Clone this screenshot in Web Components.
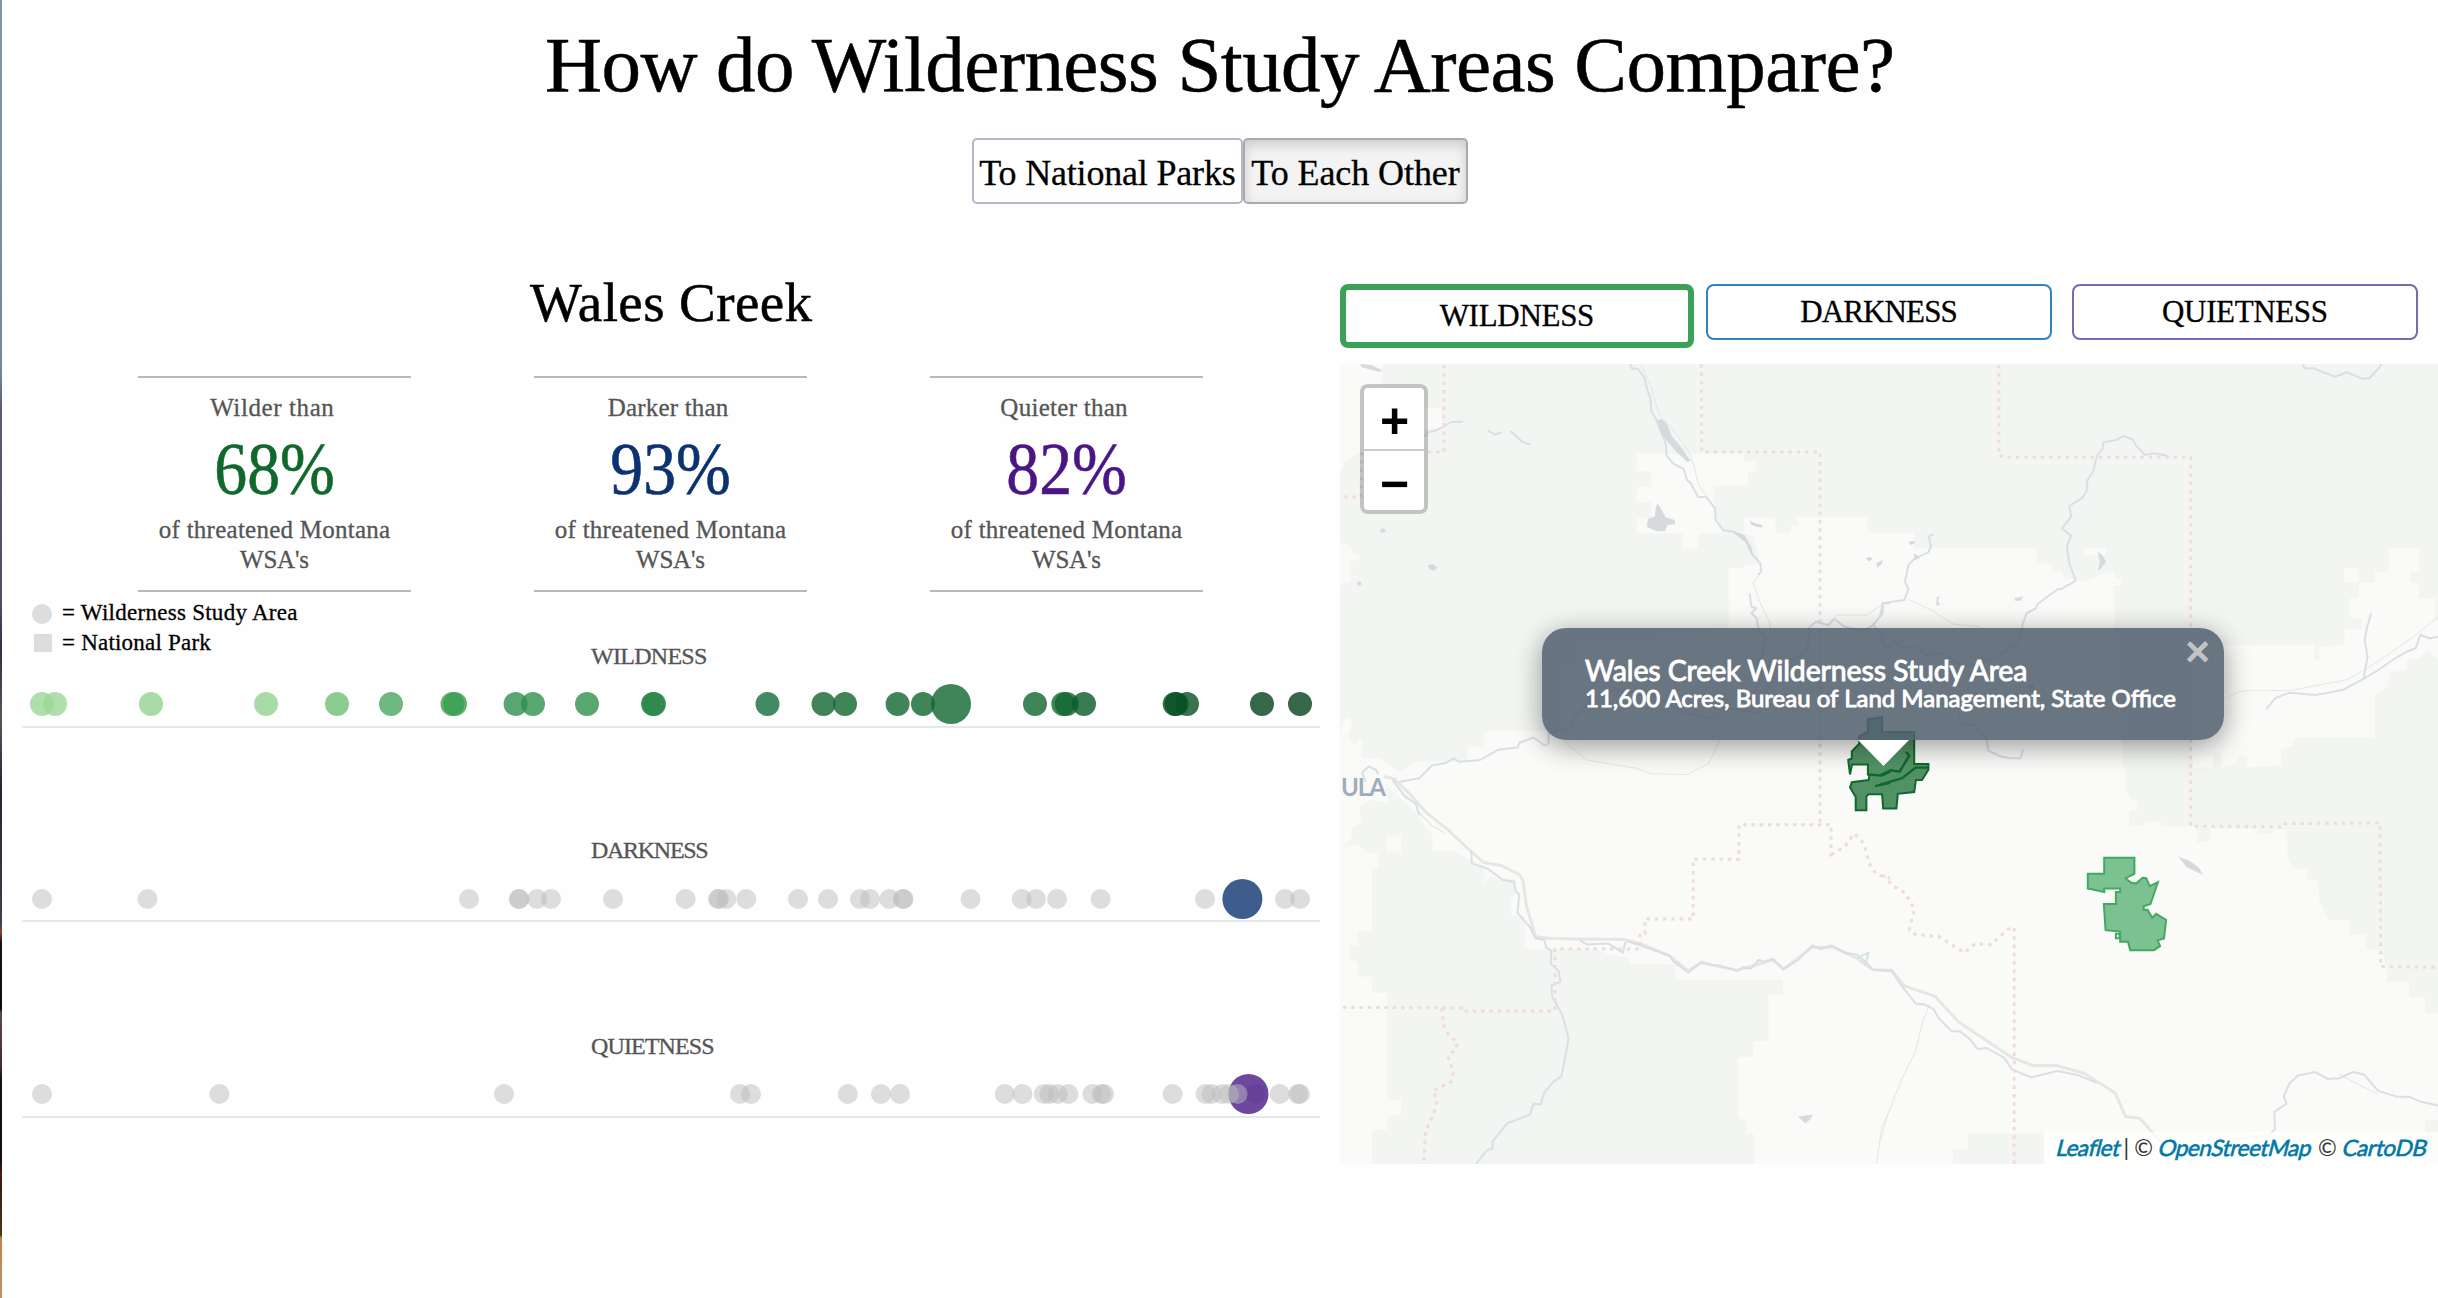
<!DOCTYPE html>
<html lang="en">
<head>
<meta charset="utf-8">
<title>How do Wilderness Study Areas Compare?</title>
<style>
html,body{margin:0;background:#fefefe}
body{font-family:"Liberation Serif",serif;color:#000;width:2438px;height:1298px;overflow:hidden}
</style>
</head>
<body>
<wsa-page></wsa-page>
<script>
/* Inline text tracked out or in to a given width: w = target width in px. */
class FitText extends HTMLElement{
  connectedCallback(){
    const r=this.attachShadow({mode:'open'});
    r.innerHTML='<style>:host{display:inline-block;white-space:nowrap}span{display:inline-block}</style><span><slot></slot></span>';
    const s=r.querySelector('span'),n=this.textContent.length;
    const ls=(+this.getAttribute('w')-s.offsetWidth)/(n-1);
    s.style.letterSpacing=ls+'px';s.style.marginRight=(-ls)+'px';
  }
}
customElements.define('fit-text',FitText);

class ToggleButton extends HTMLElement{
  connectedCallback(){
    this.attachShadow({mode:'open'}).innerHTML=`<style>
    :host{display:block;box-sizing:border-box;height:66px;border:2px solid #b6b6c9;border-radius:5px;font-size:36px;line-height:66px;text-align:center;background:#fff;-webkit-text-stroke:.3px #000}
    :host([active]){border-color:#aaa;background:#f3f3f3;box-shadow:inset 0 5px 12px rgba(0,0,0,.16)}
    </style><slot></slot>`;
  }
}
customElements.define('toggle-button',ToggleButton);

class MetricTab extends HTMLElement{
  connectedCallback(){
    this.attachShadow({mode:'open'}).innerHTML=`<style>
    :host{display:block;box-sizing:border-box;width:346px;height:56px;border:2px solid var(--c);border-radius:8px;font-size:31px;line-height:52px;text-align:center;background:#fff;-webkit-text-stroke:.3px #000}
    :host([active]){width:354px;height:64px;border-width:6px}
    </style><slot></slot>`;
  }
}
customElements.define('metric-tab',MetricTab);

class StatCard extends HTMLElement{
  connectedCallback(){
    const a=k=>this.getAttribute(k);
    this.attachShadow({mode:'open'}).innerHTML=`<style>
    :host{display:block;box-sizing:border-box;width:273px;height:216px;border:solid #b9b9b9;border-width:2px 0;padding-top:15px;text-align:center;font-size:25px;line-height:30px;color:#555;-webkit-text-stroke:.3px #555}
    .l{padding-right:5px}.n{font-size:73px;line-height:84px;margin:5px 0 3px;color:var(--c);-webkit-text-stroke:.6px var(--c);transform:scaleX(.9)}
    </style><div class="l"><fit-text w="${a('lw')}">${a('label')}</fit-text></div>
    <div class="n">${a('value')}</div>
    <div><fit-text w="231">of threatened Montana</fit-text></div><div><fit-text w="69">WSA's</fit-text></div>`;
  }
}
customElements.define('stat-card',StatCard);

/* One-dimensional dot chart; dots = "x[:colour[:radius]]" separated by spaces. */
class DotStrip extends HTMLElement{
  connectedCallback(){
    const y=this.getAttribute('y')||33;
    const dots=this.getAttribute('dots').trim().split(/\s+/).map(d=>{
      const [x,c,r]=d.split(':');
      return c?`<circle cx="${x}" cy="${y}" r="${r||12}" fill="${c}" fill-opacity=".8"/>`:`<circle cx="${x}" cy="${y}" r="10" fill="#bbb" fill-opacity=".5"/>`;
    }).join('');
    this.attachShadow({mode:'open'}).innerHTML=`<style>
    :host{display:block;font-size:24px;line-height:30px;color:#555;-webkit-text-stroke:.3px #555}
    .t{padding-left:589px;height:30px}svg{display:block}
    </style><div class="t"><fit-text w="${this.getAttribute('w')}">${this.getAttribute('label')}</fit-text></div>
    <svg width="1338" height="58" viewBox="2 0 1338 58"><path d="M22 56H1320" stroke="#e7e7e7" stroke-width="2"/>${dots}</svg>`;
  }
}
customElements.define('dot-strip',DotStrip);

class DotLegend extends HTMLElement{
  connectedCallback(){
    this.attachShadow({mode:'open'}).innerHTML=`<style>
    :host{display:block;padding-left:30px;font-size:23px;line-height:32px;-webkit-text-stroke:.3px #000}
    div{display:flex;align-items:center;height:30px;gap:10px}
    fit-text{padding-top:2px}
    svg{display:block}
    </style>
    <div><svg width="20" height="24"><circle cx="10" cy="14" r="10" fill="#ddd"/></svg><fit-text w="235">= Wilderness Study Area</fit-text></div>
    <div><svg width="20" height="24"><rect x="2" y="4" width="18" height="18" fill="#ddd"/></svg><fit-text w="149">= National Park</fit-text></div>`;
  }
}
customElements.define('dot-legend',DotLegend);

/* Map geometry is stored per tile in tile units: [originX, originY, unitsPerPxX, unitsPerPxY]. */
const TILES={A:[1330,270,2.8,3],B:[1880,270,2.81,3],C:[1330,600,2.8,2.75],D:[1880,600,2.81,2.75]};
const pts=s=>{let t;return s.trim().split(/\s+/).map(p=>{
  if(TILES[p[0]]){t=TILES[p[0]];p=p.slice(1)}
  const [x,y]=p.split(',').map(Number);
  return (t[0]+x/t[2]).toFixed(1)+' '+(t[1]+y/t[3]).toFixed(1);
}).join('L')};
const area=(s,a)=>`<path d="M${pts(s)}Z" ${a}/>`;
const line=(s,a)=>`<path d="M${pts(s)}" fill="none" ${a}/>`;

const LAND=[
'A28,282 146,282 146,345 85,345 85,545 60,560 40,580 35,600 28,605',
'A265,415 313,415 313,470 265,480',
'A28,815 60,835 62,845 85,858 75,870 57,875 57,935 28,945',
'A858,552 985,552 1160,552 1160,575 1192,575 1192,603 1170,603 1170,648 1075,648 1075,690 1082,740 1100,790 1030,790 1030,836 988,836 988,790 858,790 858,745 900,745 900,697 858,697 858,650 900,650 900,603 858,603',
'A1160,743 1247,743 1247,788 1290,788 1290,765 1310,765 1310,742 1505,742 1505,788 B0,788 95,788 95,835 440,835 440,880 483,880 483,905 510,905 520,925 550,930 570,935 645,905 660,905 660,925 678,925 678,945 657,945 657,1055 D657,77 660,160 685,260 680,460 690,460 690,515 705,550 722,550 722,580 700,580 700,620 745,620 745,610 790,610 790,622 890,622 890,665 928,665 928,628 1060,628 1060,642 1103,642 1103,632 1140,632 1145,665 1145,710 1160,740 1200,740 1200,770 1230,770 1235,830 1260,880 1320,880 1320,920 1365,920 1365,962 1410,962 1425,1010 1425,1050 1488,1050 1488,1092 1532,1092 1532,1135 1580,1135 1580,1430 1532,1430 1532,1560 460,1560 460,1467 247,1467 247,1510 205,1510 205,1560 C1187,1560 1187,1468 1165,1468 1165,1428 1143,1428 1143,1257 1185,1257 1185,1213 1228,1213 1228,1085 1268,1085 1268,1045 967,1045 967,1003 840,1000 840,985 780,975 740,960 545,960 545,870 505,865 505,825 525,800 520,770 450,760 430,780 430,730 395,715 350,690 288,690 288,650 250,600 215,560 165,520 110,500 80,490 90,470 200,470 240,445 385,445 385,403 432,403 432,360 640,360 640,190 690,190 690,108 900,108 1117,80 A1117,895 1160,895 1160,885 1205,885 1185,800 1160,790',
'C28,370 40,330 58,320 60,350 50,375 70,400 80,380 90,390 90,435 140,435 200,475 150,500 165,560 115,550 80,570 90,610 62,625 60,655 35,682 80,672 100,695 135,697 135,735 118,735 118,910 78,910 78,950 55,950 55,992 78,992 78,1035 118,1035 118,1080 160,1080 160,1375 200,1375 200,1417 160,1417 160,1457 118,1457 118,1560 28,1560',
'C158,650 200,650 200,692 158,692',
'B1305,895 1345,895 1345,938 1305,938','B570,835 635,835 635,855 570,855',
'B1430,835 1515,835 1515,905 1490,905 1490,938 1515,938 1515,985 1560,985 1560,1055 1580,1055 D1580,165 1560,160 1540,135 1515,160 1480,165 1480,190 1430,200 1430,235 1390,260 1390,378 1165,378 1160,400 1128,410 1128,455 1030,460 1030,430 1005,430 1005,450 960,460 960,420 935,420 935,460 880,462 870,380 870,124 1220,124 1220,165 1235,165 1235,130 1305,124 B1305,1078 1355,1078 1355,1050 1318,1040 1318,985 1345,985 1345,940 1390,938 1390,905 1430,905'
];
const RIVERS=[
'A840,282 845,295 862,297 880,322 890,365 897,385 900,425 912,445 940,520 942,555 960,580 990,597 1000,630 1010,640 1030,680 1055,682 1078,715 1080,750 1100,780 1130,785 1165,815 1180,850 1205,880 1207,905 1198,915',
'A1175,970 1180,1010 1193,1015 1180,1030 1195,1045 1198,1070 1218,1105 1210,1160 1195,1195',
'A265,500 275,487 300,480 340,456 372,455','A443,482 462,494 481,487','A505,484 520,497 538,515 560,524',
'A1568,1000 1548,1000 1548,1030 1520,1065 1495,1082 1440,1070 1412,1047 1395,1065 1360,1055 1342,1072 1338,1130 1300,1170 1240,1180 1200,1210',
'A1520,1065 1545,1095 1550,1125 1568,1135',
'B1187,285 1195,296 1220,295 1245,307 1280,320 1312,307 1355,326 1375,325 1405,290 1408,282',
'B812,562 800,555 768,550 745,555 718,525 710,508 682,498 665,510 628,517 626,535 612,553 605,575 600,603 583,630 580,665 570,682 532,708 537,740 512,775 537,797 525,830 532,880 550,932 510,957 500,957 443,1002 438,1015 412,1030 400,1065 397,1100 375,1130 300,1175 230,1190 180,1150 130,1155 100,1130 60,1135 40,1110 20,1130 0,1100',
'B150,793 137,800 143,830 135,848 98,865 80,885 70,935 80,958 68,990 8,1000 0,1040',
'B1380,1030 1368,1075 1362,1110 1370,1160 1358,1230',
'B1568,1100 1545,1105 1518,1095 1505,1135 1480,1145 1440,1170 1400,1200 1350,1232 1300,1260 1225,1275 1150,1268 1110,1285 1085,1318',
'D220,310 230,340 270,345 300,385 305,415 340,430 365,435 395,435 402,410',
'C100,500 90,475 108,458 130,468 135,480','C195,500 250,490 285,455 325,448 345,436 362,445 420,440 470,412 525,406 530,393 570,378 600,400 612,395 612,365 670,355 685,320 710,300 730,270 800,245 900,260 990,310 1060,325 1120,300 1200,310 1230,230',
'C175,495 210,540 240,560 250,592','C395,690 397,725 440,738 485,770 515,775 520,800 530,810 525,860 560,900 575,930 600,935 605,955 620,965 618,1000 640,1020 645,1050 620,1060 622,1090 650,1140 668,1205 658,1260 648,1310 625,1325 600,1355 590,1387 570,1385 560,1415 495,1440 455,1490 455,1510 440,1512 410,1550',
'C700,937 720,947 780,945 820,970 827,940','C830,938 870,950 950,978 962,995 1003,1024 1040,995 1070,1003 1090,1005 1140,1020 1155,1010 1180,1013 1200,990 1215,995 1240,987 1270,1015 1310,990 1350,950 1375,960 1405,950 1440,970 1475,975 1505,1000 1520,1017 1568,1020 D32,1018 60,1060 80,1085 100,1110 125,1112 150,1125 165,1150 200,1185 225,1187 250,1205 275,1235 300,1232 350,1260 370,1290 425,1313 500,1295 560,1308 610,1328',
'C1475,985 1508,970 1498,1005',
'D1568,1390 1520,1380 1490,1367 1450,1365 1400,1350 1360,1305 1330,1298 1290,1315 1258,1317 1222,1298 1175,1308 1150,1330 1135,1365 1142,1385 1108,1408 1110,1455 1095,1470'
];
const ROADS=[
['A870,285 895,335 920,430 960,480 1005,545 1020,590 1030,640 1080,720',1],
['A1207,905 1185,940 1205,1000 1232,1060 1236,1120 1330,1098',1],['A1400,1055 1418,1035 1505,1035 1550,1000',1],
['B80,988 140,1018 205,1062 280,1070 380,1130 450,1170 560,1230',1],['B1568,1040 1500,1100 1370,1195 1310,1230 1150,1262 1020,1262 980,1280',1],
['C150,485 180,492 230,540 270,585 330,632 385,682 430,722 480,730 530,755 540,770 550,840 575,925 610,930 690,932 825,934 870,945 950,978 1003,1020 1040,998 1140,1018 1240,990 1270,1015 1350,955 1410,955 1475,985 1520,1017 1568,1018 D32,1018 70,1062 155,1090 220,1160 370,1258 430,1280 495,1280 575,1302 660,1355 690,1420 730,1425 780,1480',3],
['C650,385 720,440 780,450 860,463 900,478 1000,480 1060,450 1090,390 1100,320',1],
['C250,585 285,620 320,640',1.4],['D140,1110 120,1160 100,1240 60,1320 20,1420 0,1490',1],['C1568,1400 1545,1450 1530,1550',1],
['D1290,1305 1330,1325 1400,1360',1],['D980,1485 1095,1470',1.5],['D780,1480 830,1520 880,1550',2.5]
];
const BORDERS=[
'A319,285 319,546 265,546','A90,546 86,681 28,681','A1040,283 1041,546 1372,546 1372,1070 C1372,620',
'B334,285 334,557 350,562 873,562 873,1055 D873,77 873,622 1130,624 1133,615 1405,613 1407,1008 1568,1010',
'C1403,705 1403,618 1145,618 1145,713 1017,713 1017,877 882,877 882,918 868,918 868,960 630,960 630,1130 375,1130 375,1122 28,1120',
'C1403,700 1440,680 1468,642 1495,670 1510,725 1530,755 1568,765 D10,758 35,785 70,805 97,850 82,908 100,920 165,925 237,970 268,945 312,948 360,905 377,900 377,1551',
'C313,1122 318,1170 335,1200 357,1215 352,1235 330,1255 345,1300 340,1325 288,1350 300,1375 290,1415 268,1460 262,1550'
];
const LAKES=[
'A85,282 115,285 145,300 140,306 110,298 88,292','A917,450 930,447 945,465 955,495 985,535 1010,572 1000,575 970,545 945,515 925,485',
'A917,700 930,722 940,742 965,750 967,762 945,765 938,783 915,784 887,770 890,748 910,738 912,715',
'A275,885 288,882 301,893 290,903 278,897','A138,780 150,775 158,782 146,789','A75,938 84,934 90,942 80,948',
'A1130,783 1160,795 1180,830 1185,855 1205,880 1180,852 1165,818',
'A1175,752 1190,760 1208,764 1212,773 1195,770 1180,764','A1500,865 1512,860 1520,868 1508,874','A1530,880 1548,870 1545,882 1532,893',
'B612,845 625,855 635,875 622,895 612,902 618,875','B80,815 95,813 98,820 85,825','B378,985 403,979 395,992 380,992','B95,850 108,858 112,865 98,870','B160,980 168,980 163,990 168,1008 158,1005',
'D838,706 870,718 895,735 908,756 885,745 862,735','C1311,1420 1352,1415 1345,1427 1332,1440 1320,1430','D415,235 430,230 437,250 422,255'
];

class TerrainMap extends HTMLElement{
  connectedCallback(){
    this.attachShadow({mode:'open'}).innerHTML=`<style>
    :host{display:block;position:relative;width:1098px;height:800px;overflow:hidden;background:#f3f5f2;font-family:Lato,sans-serif}
    svg{display:block}
    .zoom{position:absolute;left:20px;top:20px;width:60px;height:122px;border:4px solid rgba(0,0,0,.2);border-radius:8px;background:#fff;background-clip:padding-box;display:flex;flex-direction:column;font:bold 50px "Liberation Sans",sans-serif;text-align:center}
    .zoom div{box-sizing:border-box;height:61px;line-height:67px;padding-left:1px}.zoom div+div{border-top:2px solid #ccc;line-height:66px}
    .pop{position:absolute;left:202px;top:264px;box-sizing:border-box;width:682px;height:112px;border-radius:24px;background:rgba(84,97,112,.87);box-shadow:0 6px 28px rgba(0,0,0,.4);color:#fff;padding:27px 0 0 43px;-webkit-text-stroke:.9px #fff}
    .h{font-size:28.5px;line-height:30px;height:30px}.s{font-size:24px;line-height:26px}
    .x{position:absolute;right:14px;top:0;font:bold 43px/46px "Liberation Sans",sans-serif;color:#c3c3c3;-webkit-text-stroke:0}
    .tip{position:absolute;left:518px;top:376px}
    .att{position:absolute;right:0;bottom:0;box-sizing:border-box;width:394px;height:32px;background:rgba(255,255,255,.7);font-size:22.5px;line-height:31px;padding:0 11px 0 13px;display:flex;justify-content:space-between;color:#333}
    .att a{display:block;color:#0078a8;-webkit-text-stroke:.6px #0078a8;transform:skewX(-14deg)}
    .att .bar{margin:0 -1px 0 -3px}
    </style>
    <svg width="1098" height="800" viewBox="1340 364 1098 800">
    ${LAND.map(s=>area(s,'fill="#fafaf8"')).join('')}
    ${ROADS.map(([s,w])=>line(s,`stroke="#e6e7e5" stroke-width="${w}" stroke-linejoin="round"`)).join('')}
    ${RIVERS.map(s=>line(s,'stroke="#d7e0e3" stroke-width="2" stroke-linejoin="round"')).join('')}
    ${LAKES.map(s=>area(s,'fill="#d4dadd"')).join('')}
    ${BORDERS.map(s=>line(s,'stroke="#efdadd" stroke-width="3" stroke-dasharray="3.5 4.8"')).join('')}
    <text x="1341" y="795.5" textLength="45" font-size="24" font-weight="bold" fill="#9fadba">ULA</text>
    ${area('C1506,328 1546,323 1546,363 D96,363 96,451 136,451 136,467 118,495 101,495 96,528 50,533 46,573 11,573 C1549,573 1546,534 1508,534 1502,540 1502,578 1472,578 1472,542 1456,515 1461,501 1508,495 1510,483 1506,480 1506,452 1462,452 1456,480 1451,440 1461,436 1461,416 1482,395 1482,375 1506,362','fill="#10682c" fill-opacity=".72" stroke="#10682c" stroke-width="2"')}
    ${line('C1510,480 1545,483 1568,472 D0,482 30,468 55,472 82,428 73,418','stroke="#10682c" stroke-width="2.4"')}
    ${line('C1526,512 1568,503 D0,508 62,490 100,461 136,461','stroke="#10682c" stroke-width="2.4"')}
    ${area('D630,709 715,709 715,753 690,765 705,777 720,780 738,764 748,765 758,787 781,776 760,836 741,842 741,852 752,852 765,874 776,863 804,880 798,931 780,936 787,952 770,963 703,963 697,940 675,940 675,912 634,908 629,836 663,836 663,803 675,803 675,793 630,793 630,803 584,793 584,753 630,753','fill="#3fa75f" fill-opacity=".68" stroke="#43a962" stroke-width="2"')}
    ${area('D663,918 673,918 673,930 663,930','fill="none" stroke="#43a962" stroke-width="2"')}
    </svg>
    <div class="zoom"><div>+</div><div>−</div></div>
    <div class="pop"><div class="h"><fit-text w="442">Wales Creek Wilderness Study Area</fit-text></div><div class="s"><fit-text w="591">11,600 Acres, Bureau of Land Management, State Office</fit-text></div><div class="x">×</div></div>
    <svg class="tip" width="52" height="26"><path d="M0 0H51L25.5 26Z" fill="#fff"/></svg>
    <div class="att"><a><fit-text w="64">Leaflet</fit-text></a><span class="bar">|</span><span>©</span><a><fit-text w="153">OpenStreetMap</fit-text></a><span>©</span><a><fit-text w="84">CartoDB</fit-text></a></div>`;
  }
}
customElements.define('terrain-map',TerrainMap);

class WsaPage extends HTMLElement{
  connectedCallback(){
    this.attachShadow({mode:'open'}).innerHTML=`<style>
    :host{display:grid;grid-template-columns:2px 1fr;height:1298px}
    .edge{background:linear-gradient(#8496a6 0,#75889a 370px,#575e6c 410px,#4c5060 600px,#303341 650px,#55555f 720px,#232533 790px,#3c414d 925px,#8a4a20 932px,#171314 942px,#0d0b0c 1009px,#5a4a48 1013px,#40302c 1066px,#15100e 1080px,#160e0b 1160px,#4a1c10 1174px,#33220f 1190px,#4b3a15 1235px,#c98040 1238px,#c49066)}
    h1,h2{margin:0;font-weight:normal;text-align:center;-webkit-text-stroke:.5px #000}
    h1{font-size:79px;line-height:120px;padding-top:5px;height:118px}
    .toggles{display:flex;justify-content:center;margin-top:15px}
    .toggles>:first-child{width:271px}.toggles>:last-child{width:225px}
    .cols{display:grid;grid-template-columns:1338px 1098px}
    h2{font-size:55px;line-height:80px;padding:59px 0 33px}
    .cards{display:flex;gap:123px;margin-left:136px}
    dot-legend{margin-top:5px}
    dot-strip{height:194px}dot-strip:nth-of-type(2){height:196px}
    .first{margin-top:-16px}
    .tabs{display:flex;align-items:flex-start;padding-top:80px;margin-bottom:16px}
    </style>
    <div class="edge"></div>
    <main>
      <h1><fit-text w="1350">How do Wilderness Study Areas Compare?</fit-text></h1>
      <div class="toggles"><toggle-button><fit-text w="256">To National Parks</fit-text></toggle-button><toggle-button active><fit-text w="208">To Each Other</fit-text></toggle-button></div>
      <div class="cols">
        <section>
          <h2><fit-text w="282">Wales Creek</fit-text></h2>
          <div class="cards">
            <stat-card label="Wilder than" lw="124" value="68%" style="--c:#10682c"></stat-card>
            <stat-card label="Darker than" lw="121" value="93%" style="--c:#0c3370"></stat-card>
            <stat-card label="Quieter than" lw="127" value="82%" style="--c:#4a1683"></stat-card>
          </div>
          <dot-legend></dot-legend>
          <dot-strip class="first" label="WILDNESS" w="116" dots="42:#9ed698 55:#9ed698 151:#96d194 266:#96d194 337:#6ec175 391:#49a560 452.5:#399f53 455:#399f53 515.6:#30904f 533:#30904f 587:#30904f 653:#258646 654:#258646 767.5:#106e3b 823.5:#10672e 845:#10672e 897.6:#10672e 923:#10672e 951:#10672e:20 1035:#10672e 1063.3:#10672e 1066.8:#10672e 1084:#095b26 1174.7:#055023 1176.5:#055023 1187:#085123 1262:#04421c 1300:#04421c"></dot-strip>
          <dot-strip label="DARKNESS" w="118" y="34" dots="42 147.5 469 518.7 519.3 537 551 613 685.6 718 719 726.3 746.3 798 828 860 870 889.4 902.8 903.6 970.5 1021.7 1036 1057 1100.6 1205 1242.4:#0c366f:20 1285 1300"></dot-strip>
          <dot-strip label="QUIETNESS" w="124" dots="42 219.4 504 740 751 847.8 881 900 1004.8 1022.5 1043.8 1049.4 1057.7 1068.5 1092.4 1101.5 1104 1172.6 1205.5 1211.6 1222 1255 1248.5:#4a1986:20 1229 1237.6 1279.7 1298 1300"></dot-strip>
        </section>
        <section>
          <div class="tabs"><metric-tab active style="--c:#3ba159"><fit-text w="155">WILDNESS</fit-text></metric-tab><metric-tab style="--c:#3182bd;margin:0 20px 0 12px"><fit-text w="158">DARKNESS</fit-text></metric-tab><metric-tab style="--c:#756bb1"><fit-text w="166">QUIETNESS</fit-text></metric-tab></div>
          <terrain-map></terrain-map>
        </section>
      </div>
    </main>`;
  }
}
customElements.define('wsa-page',WsaPage);
</script>
</body>
</html>
